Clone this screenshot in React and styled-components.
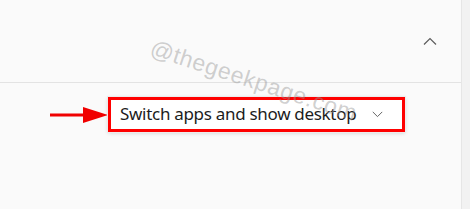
import React from "react";
import styled, { createGlobalStyle } from "styled-components";

const GlobalStyle = createGlobalStyle`
  html, body {
    margin: 0;
    padding: 0;
    background: #fafafa;
  }
  body {
    font-family: "Segoe UI", "Noto Sans", "Liberation Sans", sans-serif;
  }
`;

const Page = styled.div`
  position: relative;
  display: flex;
  width: 470px;
  height: 209px;
  overflow: hidden;
`;

const Main = styled.div`
  width: 461px;
  display: flex;
  flex-direction: column;
  border-right: 1px solid #e6e6e6;
`;

const Rail = styled.div`
  flex: 1;
  background: #f2f2f2;
`;

const Header = styled.div`
  height: 82px;
  border-bottom: 1px solid #e3e3e3;
  display: flex;
  align-items: center;
  justify-content: flex-end;
  padding-right: 24px;
`;

const Body = styled.div`
  display: flex;
  align-items: center;
  padding: 14px 0 0 50px;
`;

const Dropdown = styled.div`
  box-sizing: border-box;
  width: 297px;
  height: 35px;
  display: flex;
  align-items: center;
  justify-content: space-between;
  padding: 0 19px 0 9px;
  background: #ffffff;
  border: 3px solid #ff0000;
  box-shadow: 0 0 0 1px #ececec, 0 1px 4px rgba(0, 0, 0, 0.18);
`;

const Label = styled.span`
  font-size: 17px;
  letter-spacing: -0.3px;
  color: #1c1c1c;
  line-height: 1;
  padding-bottom: 2px;
`;

const Watermark = styled.div`
  position: absolute;
  left: 151px;
  top: 34px;
  font-family: "Liberation Sans", Arial, sans-serif;
  font-size: 23px;
  letter-spacing: 0.6px;
  color: rgba(150, 150, 150, 0.45);
  transform: rotate(18deg);
  transform-origin: left center;
  pointer-events: none;
  white-space: nowrap;
`;

const Chevron = ({ up, size }) => (
  <svg width={size} height={size / 2 + 1} viewBox="0 0 14 8" fill="none">
    <path
      d={up ? "M1 7.5 L7 1.5 L13 7.5" : "M1 1 L7 7 L13 1"}
      stroke="#5c5c5c"
      strokeWidth="1.2"
    />
  </svg>
);

const Arrow = () => (
  <svg width="58" height="18" viewBox="0 0 58 18">
    <rect x="0" y="7.5" width="36" height="3" fill="#f00000" />
    <polygon points="33,1 58,9 33,17" fill="#f00000" />
  </svg>
);

export default function App() {
  return (
    <>
      <GlobalStyle />
      <Page>
        <Main>
          <Header>
            <Chevron up size={14} />
          </Header>
          <Body>
            <Arrow />
            <Dropdown>
              <Label>Switch apps and show desktop</Label>
              <Chevron size={11} />
            </Dropdown>
          </Body>
        </Main>
        <Rail />
        <Watermark>@thegeekpage.com</Watermark>
      </Page>
    </>
  );
}
